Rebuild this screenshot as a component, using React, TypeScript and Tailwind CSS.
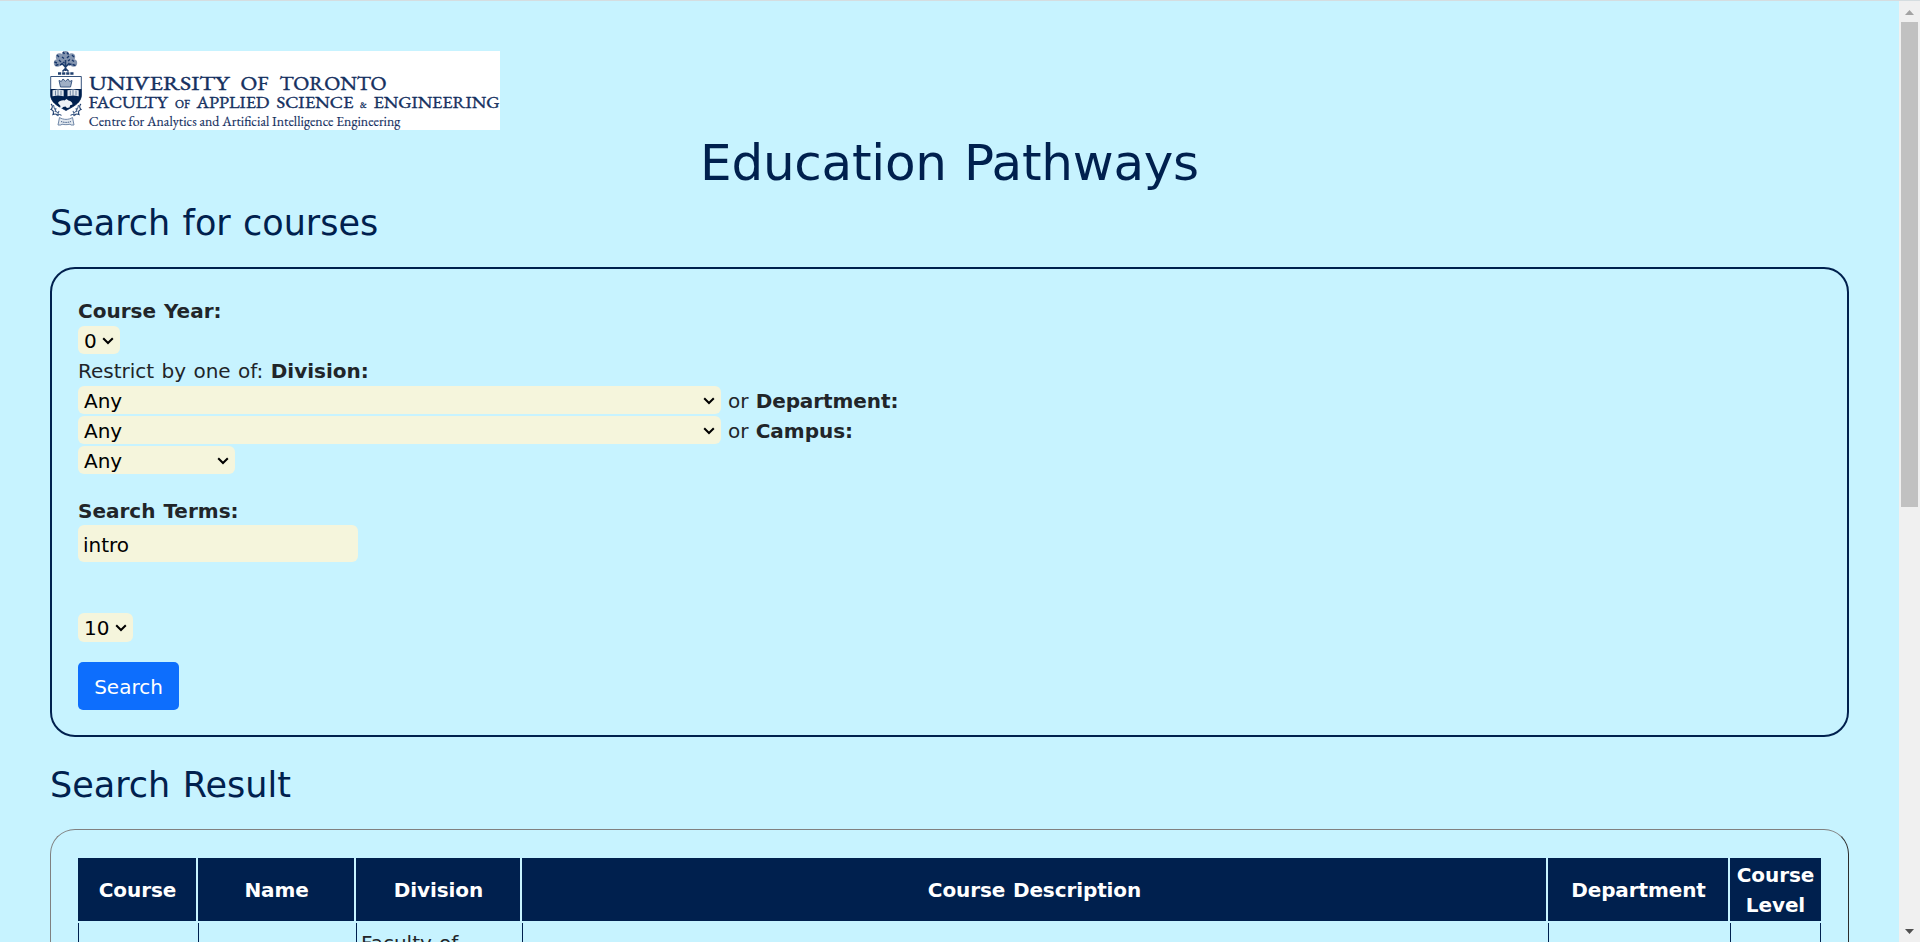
import type { ReactNode } from "react";

function Crest() {
  return (
    <g fill="none" stroke="#1f3f6e" strokeWidth="1">
      <g fill="#8495b0" stroke="none">
        <circle cx="15.500" cy="3.700" r="3.700" />
        <circle cx="9.500" cy="6" r="3.700" />
        <circle cx="21.500" cy="6" r="3.700" />
        <circle cx="7.500" cy="12" r="3.700" />
        <circle cx="23.500" cy="12" r="3.700" />
        <circle cx="15.500" cy="10" r="5" />
      </g>
      <path
        d="M13 1l1.500 2M17 1.500l1.500 2M7 4l2 2M22 4l2 2M12 6l2 1.500M17 7l2-2M4.500 11l2.500 1M9 9l2 2M13 11l1.500 1M18 10l2-1.500M22 9l2 1.500M5.500 14.500l3-1M22.500 13.500l3 1M10 14l3-1.500M18.500 14l3-1"
        stroke="#17366a"
        strokeWidth="1.400"
      />
      <path d="M15.500 9v11M11.500 12l4 4 4-4M12.500 20.500l3-3 3 3" strokeWidth="1.600" />
      <path d="M8 22.500h15.500" strokeWidth="2.400" strokeDasharray="3.200 .9" />
      <path d="M.7 25.500h30.600V44c0 5.500-4.500 9.500-9 12l-6.300 3.500L9.700 56c-4.500-2.500-9-6.500-9-12z" fill="#fff" strokeWidth=".9" />
      <path d="M.5 38h31v6c0 5.500-4.500 9.500-9.200 12L16 59.500 9.700 56C5 53.500.5 49.500.5 44z" fill="#00204e" stroke="none" />
      <path d="M10.500 36l-1.500-6.500 2.300 1L13 28l2.500 2.200L18 28l1.700 2.500 2.300-1-1.500 6.500z" fill="#9fafc5" stroke="#3d5a84" />
      <path d="M2.500 39.300l5.500-.8 5.700.8v5.900l-5.700-.7-5.500.7zM17.500 39.300l5.500-.8 5.700.8v5.900l-5.700-.7-5.500.7z" fill="#dfe5ec" stroke="none" />
      <path d="M8 39v5.500M23 39v5.500M5.500 39.500v5M11 39.500v5M20.300 39.500v5M26 39.500v5" strokeWidth=".6" />
      <path d="M8 52c1-2 4-3 6.500-2.500l2-1.500 2 1.500c2.500.5 4 2 4 4l-2.300.7-.7 2.300-2.500.5-1.500-1.500-2.500.5-1 1.500-2-.5.500-2z" fill="#edf1f5" stroke="none" />
      <path d="M1 53c2 1.500 1.500 4 0 5.500 2 .5 3 2 2 5 2-1 4-.5 5.500 1.500M31 53c-2 1.500-1.500 4 0 5.500-2 .5-3 2-2 5-2-1-4-.5-5.500 1.500" strokeWidth="1.100" />
      <path d="M3.500 54c.5 5 4 8.500 8 10.500M28.500 54c-.5 5-4 8.500-8 10.500M6 57l-1 4M9 60l-2 5M26 57l1 4M23 60l2 5" stroke="#4a658d" strokeWidth="1.100" />
      <path d="M9.500 66.500c4 2.500 9 2.500 13 0l1.500 7.500h-3l-1-.8c-2.700.6-5.500.6-8 0l-1 .8H8z" fill="#e1e7ee" stroke="#7188a8" />
      <path d="M11 70.500c3 1.200 7 1.200 10 0" stroke="#4a658d" strokeDasharray="1.500 .7" />
    </g>
  );
}

function Logo() {
  return (
    <svg
      width="450"
      height="79"
      viewBox="0 0 450 79"
      className="block bg-white font-['EB_Garamond','Liberation_Serif',serif] [word-spacing:0]"
      fill="#15305f"
      role="img"
    >
      <Crest />
      <g fontSize="20" stroke="#15305f" strokeWidth=".45">
        <text x="39" y="38.500" textLength="140" lengthAdjust="spacingAndGlyphs">UNIVERSITY</text>
        <text x="190.500" y="38.500" textLength="28" lengthAdjust="spacingAndGlyphs">OF</text>
        <text x="229.500" y="38.500" textLength="107" lengthAdjust="spacingAndGlyphs">TORONTO</text>
      </g>
      <g fontSize="17" stroke="#15305f" strokeWidth=".4">
        <text x="38.500" y="57.300" textLength="79" lengthAdjust="spacingAndGlyphs">FACULTY</text>
        <text x="125" y="57.300" fontSize="11" textLength="15" lengthAdjust="spacingAndGlyphs">OF</text>
        <text x="146.500" y="57.300" textLength="73" lengthAdjust="spacingAndGlyphs">APPLIED</text>
        <text x="226.500" y="57.300" textLength="77" lengthAdjust="spacingAndGlyphs">SCIENCE</text>
        <text x="310" y="57.300" fontSize="9.500" textLength="6.500" lengthAdjust="spacingAndGlyphs">&amp;</text>
        <text x="323.500" y="57.300" textLength="126" lengthAdjust="spacingAndGlyphs">ENGINEERING</text>
      </g>
      <text x="38.800" y="75.300" fontSize="14" stroke="#15305f" strokeWidth=".15" textLength="311.500" lengthAdjust="spacingAndGlyphs">
        Centre for Analytics and Artificial Intelligence Engineering
      </text>
    </svg>
  );
}

function Select({ value, className }: { value: string; className: string }) {
  return (
    <div className={`flex items-center justify-between rounded-[6px] bg-[#f5f5dc] pl-1.5 pr-[6px] text-black ${className}`}>
      <span className="pt-px leading-7">{value}</span>
      <svg width="12" height="8" viewBox="0 0 12 8" className="mt-px" fill="none" stroke="#000" strokeWidth="2">
        <path d="M1.200 1.200 6 6l4.800-4.800" />
      </svg>
    </div>
  );
}

function Row({ children }: { children: ReactNode }) {
  return <div className="flex h-[30px] items-center">{children}</div>;
}

function Label({ children }: { children: ReactNode }) {
  return <div className="h-[30px] pt-px [word-spacing:1px]">{children}</div>;
}

const columns = [
  { title: "Course", cell: "" },
  { title: "Name", cell: "" },
  { title: "Division", cell: "Faculty of" },
  { title: "Course Description", cell: "" },
  { title: "Department", cell: "" },
  { title: "Course Level", cell: "" },
];

const grid = "grid grid-cols-[118px_156px_164px_1024px_180px_91px] gap-x-0.5";

export default function App() {
  return (
    <div className="flex h-[942px] w-[1920px] flex-col overflow-hidden border-t border-[#d5dde0] bg-[#c7f3ff] font-['DejaVu_Sans',Verdana,sans-serif] text-[20px] leading-[30px] text-[#212529] [word-spacing:0.8px]">
      <div className="flex min-h-0 flex-1">
        <main className="w-[1899px] overflow-hidden px-[50px] pt-[50px]">
          <Logo />
          <h1 className="h-[60px] pt-[3px] text-center text-[50px] leading-[60px] tracking-[-0.25px] text-[#00204e] [word-spacing:1.5px]">Education Pathways</h1>
          <h3 className="mt-2.5 h-[42px] pt-0.5 text-[35px] leading-[42px] text-[#00204e] [word-spacing:1.2px]">Search for courses</h3>

          <section className="mt-[25px] h-[470px] rounded-[25px] border-2 border-[#00204e] px-[26px] pt-[26px]">
            <Label><b>Course Year:</b></Label>
            <Row><Select value="0" className="h-7 w-[42px]" /></Row>
            <Label>Restrict by one of: <b>Division:</b></Label>
            <Row>
              <Select value="Any" className="h-7 w-[643px]" />
              <span className="pl-[7px] pt-px">or <b className="tracking-[-0.08px]">Department:</b></span>
            </Row>
            <Row>
              <Select value="Any" className="h-7 w-[643px]" />
              <span className="pl-[7px] pt-px">or <b>Campus:</b></span>
            </Row>
            <Row><Select value="Any" className="h-7 w-[157px]" /></Row>
            <div className="mt-5"><Label><b>Search Terms:</b></Label></div>
            <div className="h-[37px] w-[280px] rounded-[6px] bg-[#f5f5dc] pl-[5px] pt-[5px] text-black">intro</div>
            <Select value="10" className="mt-[51px] h-[29px] w-[55px]" />
            <button className="mt-5 flex h-12 w-[101px] justify-center rounded-[5px] bg-[#0d6efd] pt-2.5 leading-[30px] text-white">
              Search
            </button>
          </section>

          <h3 className="mt-[25px] h-[42px] pt-0.5 text-[35px] leading-[42px] text-[#00204e] [word-spacing:1.4px]">Search Result</h3>

          <section className="mt-[25px] h-[400px] rounded-[25px] border border-b-[#2c2c2c] border-l-[#808080] border-r-[#2c2c2c] border-t-[#808080] px-[27px] pt-7">
            <div className={`${grid} h-[63px] text-center font-bold tracking-[-0.1px] text-white`}>
              {columns.map((c) => (
                <div key={c.title} className="flex items-center justify-center bg-[#00204e] pl-px last:pl-0">
                  {c.title}
                </div>
              ))}
            </div>
            <div className={`${grid} mt-0.5 h-[300px]`}>
              {columns.map((c) => (
                <div key={c.title} className="border-l border-[#00204e] pl-1 pt-[5px] last:border-r">
                  {c.cell}
                </div>
              ))}
            </div>
          </section>
        </main>

        <aside className="flex w-[21px] flex-col items-center bg-[#f0f0f0]">
          <svg width="9" height="5" viewBox="0 0 9 5" className="mt-[9px]" fill="#a3a3a3">
            <path d="M0 5 4.500 0 9 5z" />
          </svg>
          <div className="mr-px mt-[7px] h-[485px] w-[17px] bg-[#c1c1c1]" />
          <svg width="9" height="5" viewBox="0 0 9 5" className="mb-2 mt-auto" fill="#505050">
            <path d="M0 0 4.500 5 9 0z" />
          </svg>
        </aside>
      </div>
    </div>
  );
}
